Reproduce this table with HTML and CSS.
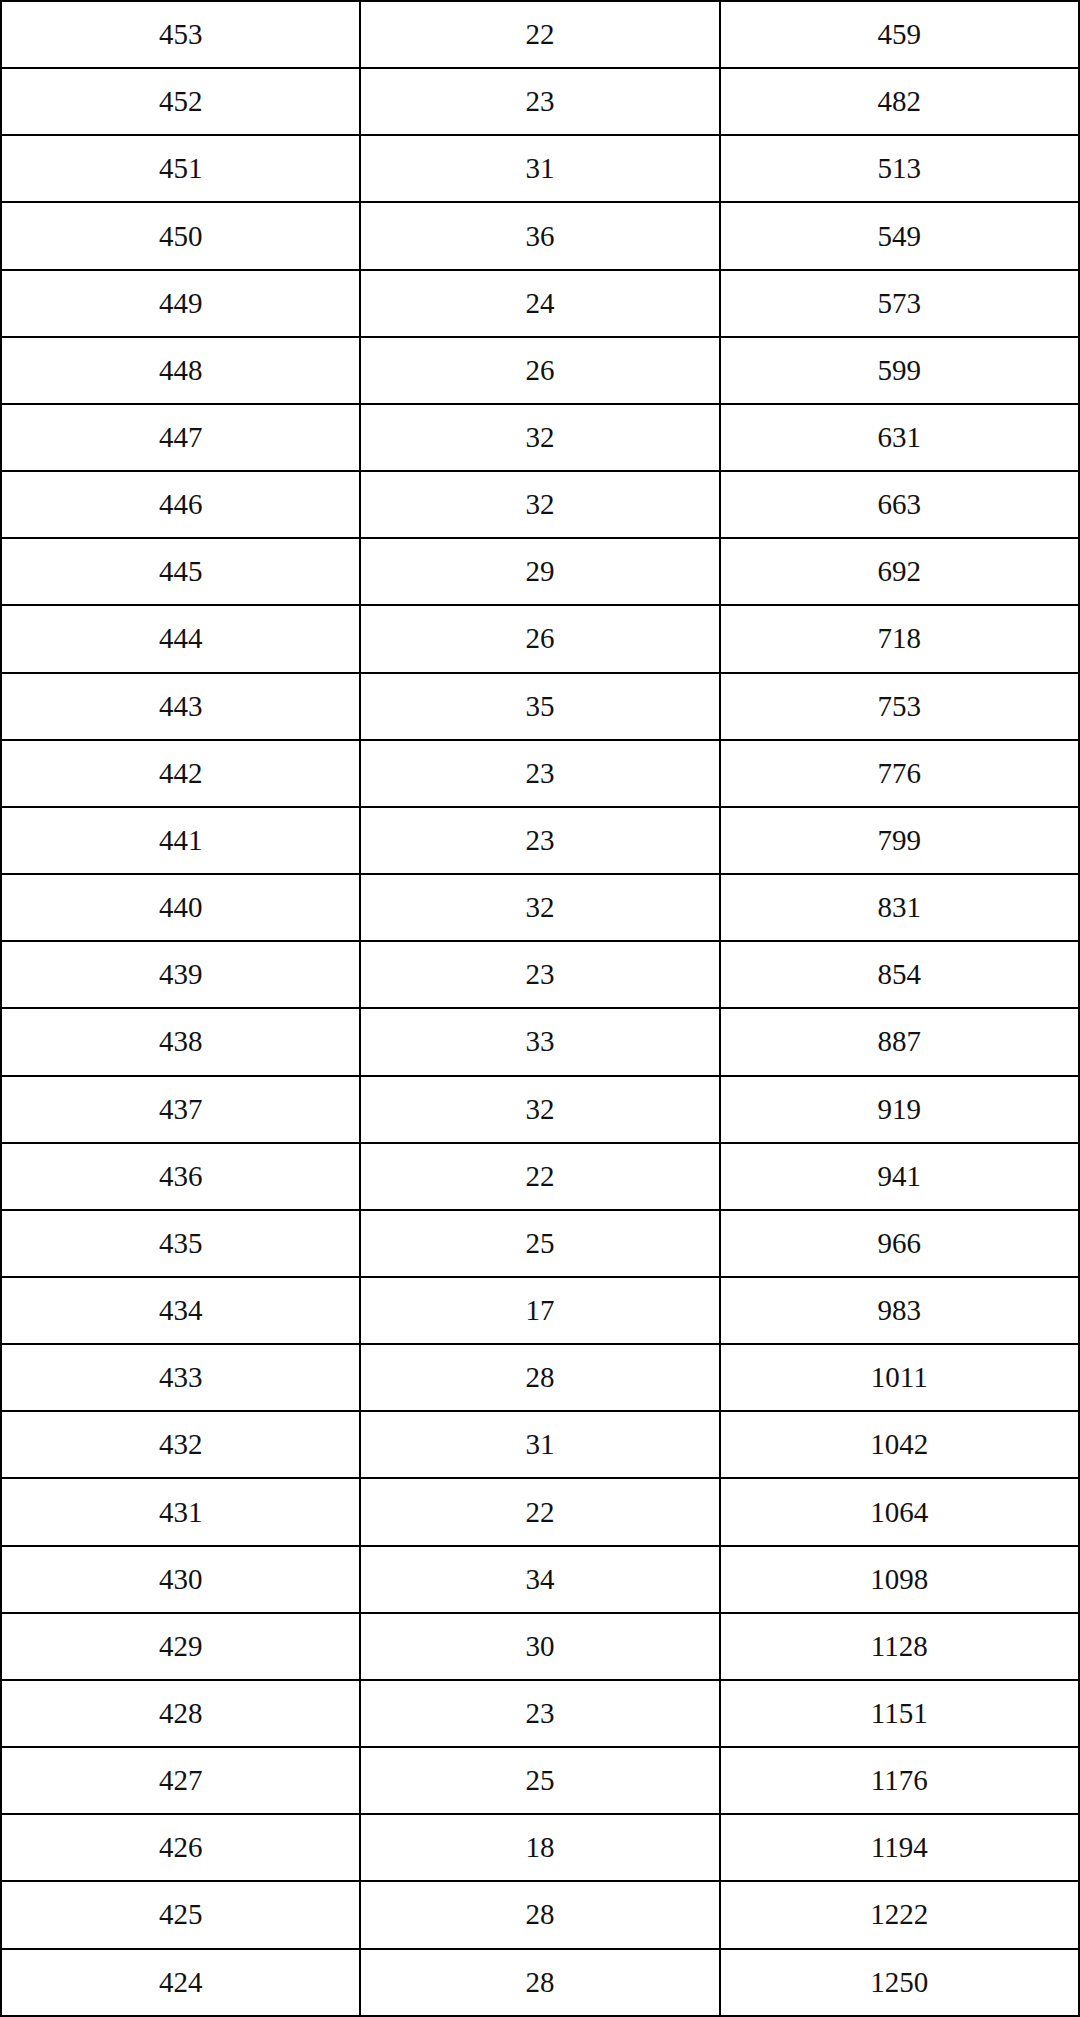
FILE: index.html
```html
<!DOCTYPE html>
<html>
<head>
<meta charset="utf-8">
<link rel="stylesheet" href="styles.css">
</head>
<body>
<table class="score-table">
<tbody>
<tr><td>453</td><td>22</td><td>459</td></tr>
<tr><td>452</td><td>23</td><td>482</td></tr>
<tr><td>451</td><td>31</td><td>513</td></tr>
<tr><td>450</td><td>36</td><td>549</td></tr>
<tr><td>449</td><td>24</td><td>573</td></tr>
<tr><td>448</td><td>26</td><td>599</td></tr>
<tr><td>447</td><td>32</td><td>631</td></tr>
<tr><td>446</td><td>32</td><td>663</td></tr>
<tr><td>445</td><td>29</td><td>692</td></tr>
<tr><td>444</td><td>26</td><td>718</td></tr>
<tr><td>443</td><td>35</td><td>753</td></tr>
<tr><td>442</td><td>23</td><td>776</td></tr>
<tr><td>441</td><td>23</td><td>799</td></tr>
<tr><td>440</td><td>32</td><td>831</td></tr>
<tr><td>439</td><td>23</td><td>854</td></tr>
<tr><td>438</td><td>33</td><td>887</td></tr>
<tr><td>437</td><td>32</td><td>919</td></tr>
<tr><td>436</td><td>22</td><td>941</td></tr>
<tr><td>435</td><td>25</td><td>966</td></tr>
<tr><td>434</td><td>17</td><td>983</td></tr>
<tr><td>433</td><td>28</td><td>1011</td></tr>
<tr><td>432</td><td>31</td><td>1042</td></tr>
<tr><td>431</td><td>22</td><td>1064</td></tr>
<tr><td>430</td><td>34</td><td>1098</td></tr>
<tr><td>429</td><td>30</td><td>1128</td></tr>
<tr><td>428</td><td>23</td><td>1151</td></tr>
<tr><td>427</td><td>25</td><td>1176</td></tr>
<tr><td>426</td><td>18</td><td>1194</td></tr>
<tr><td>425</td><td>28</td><td>1222</td></tr>
<tr><td>424</td><td>28</td><td>1250</td></tr>
</tbody>
</table>
</body>
</html>
```

FILE: styles.css
```css
html, body {
  margin: 0;
  padding: 0;
  background: #ffffff;
}

.score-table {
  width: 1080px;
  height: 2017px;
  border-collapse: collapse;
  table-layout: fixed;
  font-family: "Liberation Serif", "Noto Sans CJK SC", serif;
  font-size: 29px;
  line-height: 1;
  color: #111111;
}

.score-table td {
  border: 2px solid #000000;
  text-align: center;
  vertical-align: middle;
  padding: 0;
}
```
